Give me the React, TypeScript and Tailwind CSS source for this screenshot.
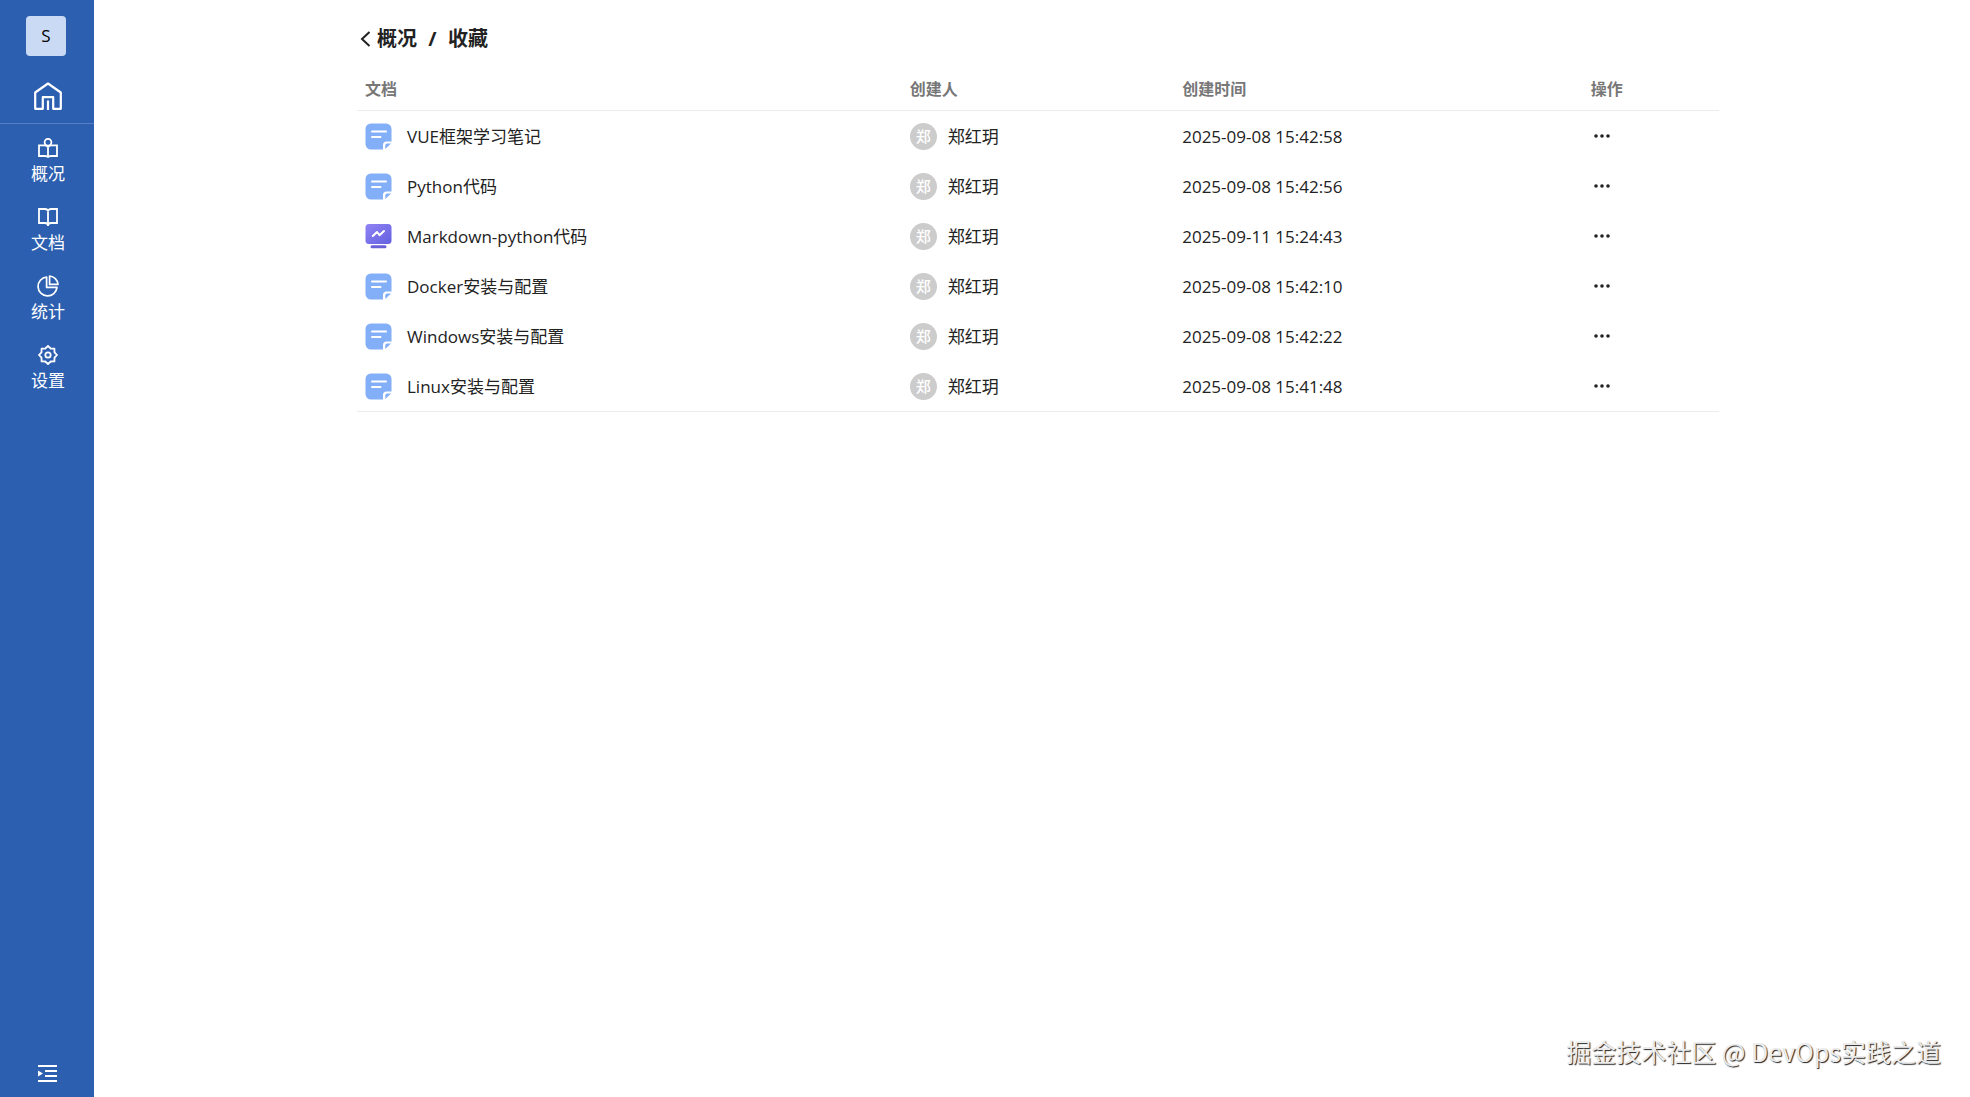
import type { ReactNode } from "react";

type Doc = { title: string; kind: "note" | "markdown"; time: string };

const author = "郑红玥";

const docs: Doc[] = [
  { title: "VUE框架学习笔记", kind: "note", time: "2025-09-08 15:42:58" },
  { title: "Python代码", kind: "note", time: "2025-09-08 15:42:56" },
  { title: "Markdown-python代码", kind: "markdown", time: "2025-09-11 15:24:43" },
  { title: "Docker安装与配置", kind: "note", time: "2025-09-08 15:42:10" },
  { title: "Windows安装与配置", kind: "note", time: "2025-09-08 15:42:22" },
  { title: "Linux安装与配置", kind: "note", time: "2025-09-08 15:41:48" },
];

function HomeIcon() {
  return (
    <svg className="size-7" viewBox="0 0 28 28" fill="none" stroke="currentColor" strokeWidth="2.2" aria-hidden="true">
      <path d="M1.200 26.800V10.500L14 1.500 26.800 10.500V26.800H19.200V15.200H8.800V26.800H1.200Z" strokeLinejoin="round" />
      <path d="M14 18.500V28" />
    </svg>
  );
}

function ReaderIcon() {
  return (
    <svg className="size-5" viewBox="0 0 20 20" fill="none" stroke="currentColor" strokeWidth="1.8" aria-hidden="true">
      <circle cx="10" cy="4.200" r="3.400" />
      <path d="M1 7.400H6.600C8.600 7.400 10 8.400 10 9.800 10 8.400 11.400 7.400 13.400 7.400H19V18H13.200C11.400 18 10 18.600 10 19.400 10 18.600 8.600 18 6.800 18H1Z" />
      <path d="M10 9.500V19.400" />
    </svg>
  );
}

function BookIcon() {
  return (
    <svg className="size-5" viewBox="0 0 20 20" fill="none" stroke="currentColor" strokeWidth="1.8" aria-hidden="true">
      <path d="M1 2H7C8.700 2 10 3.200 10 4.600 10 3.200 11.300 2 13 2H19V16H13C11.500 16 10 17 10 18.600 10 17 8.500 16 7 16H1Z" />
      <path d="M10 4.400V19" />
    </svg>
  );
}

function PieIcon() {
  return (
    <svg className="-my-px size-[22px]" viewBox="0 0 22 22" fill="none" stroke="currentColor" strokeWidth="1.7" strokeLinejoin="round" aria-hidden="true">
      <path d="M9.600 2A9.500 9.500 0 1 0 20 12.400H9.600Z" />
      <path d="M12.600 1A9.300 9.300 0 0 1 21 9.400H12.600Z" />
    </svg>
  );
}

function GearIcon() {
  return (
    <svg className="size-5" viewBox="0 0 20 20" fill="none" stroke="currentColor" strokeWidth="1.8" strokeLinejoin="round" aria-hidden="true">
      <path d="M10 1 12.700 3.500 16.400 3.600 16.500 7.300 19 10 16.500 12.700 16.400 16.400 12.700 16.500 10 19 7.300 16.500 3.600 16.400 3.500 12.700 1 10 3.500 7.300 3.600 3.600 7.300 3.500Z" />
      <circle cx="10" cy="10" r="2.700" />
    </svg>
  );
}

function ExpandIcon() {
  return (
    <svg className="h-[17px] w-[19px]" viewBox="0 0 19 17" fill="currentColor" aria-hidden="true">
      <path d="M0 0H19V2H0ZM7 5H19V7H7ZM7 10H19V12H7ZM0 15H19V17H0ZM0 5.600 5 8.500 0 11.400Z" />
    </svg>
  );
}

function NoteIcon() {
  return (
    <svg className="size-[27px] shrink-0" viewBox="0 0 27 27" aria-hidden="true">
      <path d="M6 .5H21A5.500 5.500 0 0 1 26.500 6V18.500H21.500A3.500 3.500 0 0 0 18 22V26.500H6A5.500 5.500 0 0 1 .5 21V6A5.500 5.500 0 0 1 6 .5Z" fill="#82aff7" />
      <path d="M26 20.500 20.300 26V22.500A2 2 0 0 1 22.300 20.500Z" fill="#82aff7" />
      <path d="M7 8.500H21M7 14H15.500" stroke="#fff" strokeWidth="2" strokeLinecap="round" />
    </svg>
  );
}

function MarkdownIcon() {
  return (
    <svg className="size-[27px] shrink-0" viewBox="0 0 27 27" aria-hidden="true">
      <defs>
        <linearGradient id="screen" x1="0" y1="0" x2="1" y2="1">
          <stop offset="0" stopColor="#9184f5" />
          <stop offset="1" stopColor="#6360df" />
        </linearGradient>
      </defs>
      <rect x=".5" y="1" width="26" height="20" rx="3.500" fill="url(#screen)" />
      <rect x="5.500" y="22.200" width="16" height="3" rx="1.500" fill="#6a60d8" />
      <path d="M7.800 13 12 9 14.500 12.200 19 8" fill="none" stroke="#fff" strokeWidth="2" strokeLinecap="round" strokeLinejoin="round" />
    </svg>
  );
}

function NavItem({ icon, label }: { icon: ReactNode; label: string }) {
  return (
    <a href="#" className="flex h-[69px] flex-col items-center justify-center gap-1 pl-0.5 text-[17px] leading-6">
      {icon}
      <span>{label}</span>
    </a>
  );
}

function Sidebar() {
  return (
    <aside className="flex w-[94px] shrink-0 flex-col bg-[#2d5fb0] text-white">
      <button aria-label="空间 S" className="mt-4 ml-[26px] size-10 rounded bg-[#cbdaf4] text-[17px] text-black">
        S
      </button>
      <a href="#" aria-label="首页" className="flex h-[68px] items-center justify-center border-b border-[#5580c8] pt-3 pl-0.5">
        <HomeIcon />
      </a>
      <nav className="mt-[3px] flex flex-col">
        <NavItem icon={<ReaderIcon />} label="概况" />
        <NavItem icon={<BookIcon />} label="文档" />
        <NavItem icon={<PieIcon />} label="统计" />
        <NavItem icon={<GearIcon />} label="设置" />
      </nav>
      <button aria-label="展开菜单" className="mt-auto mb-[15px] flex justify-center">
        <ExpandIcon />
      </button>
    </aside>
  );
}

function DocTable() {
  return (
    <table className="mt-3 w-full table-fixed border-collapse text-left">
      <colgroup>
        <col className="w-[40%]" />
        <col className="w-[20%]" />
        <col className="w-[30%]" />
        <col className="w-[10%]" />
      </colgroup>
      <thead>
        <tr className="h-11 border-b border-[#ececec] text-base text-[#777]">
          <th scope="col" className="px-2 pt-0.5 font-bold">文档</th>
          <th scope="col" className="px-2 pt-0.5 font-bold">创建人</th>
          <th scope="col" className="px-2 pt-0.5 font-bold">创建时间</th>
          <th scope="col" className="px-2 pt-0.5 font-bold">操作</th>
        </tr>
      </thead>
      <tbody className="border-b border-[#ececec]">
        {docs.map((doc) => (
          <tr key={doc.title} className="h-[50px] last:h-[51px]">
            <td className="px-2 pt-0.5">
              <a href="#" className="flex items-center gap-[15px]">
                {doc.kind === "note" ? <NoteIcon /> : <MarkdownIcon />}
                <span className="pt-0.5">{doc.title}</span>
              </a>
            </td>
            <td className="px-2 pt-0.5">
              <div className="flex items-center gap-[11px]">
                <span className="flex size-[27px] items-center justify-center rounded-full bg-[#ccc] text-[15px] leading-5 font-medium text-white">
                  {author[0]}
                </span>
                <span className="pt-0.5">{author}</span>
              </div>
            </td>
            <td className="px-2 pt-1">{doc.time}</td>
            <td className="px-2 pt-0.5">
              <button aria-label="更多操作" className="flex px-0.5">
                <svg className="h-4 w-[18px]" viewBox="0 0 18 16" fill="currentColor" aria-hidden="true">
                  <circle cx="3" cy="8" r="1.800" />
                  <circle cx="9" cy="8" r="1.800" />
                  <circle cx="15" cy="8" r="1.800" />
                </svg>
              </button>
            </td>
          </tr>
        ))}
      </tbody>
    </table>
  );
}

export default function App() {
  return (
    <div className="relative flex min-h-screen bg-white font-['Open_Sans','Noto_Sans_CJK_SC',sans-serif] text-[17px] leading-6 text-[#222]">
      <Sidebar />
      <main className="min-w-0 flex-1 pt-6 pl-3">
        <div className="mx-auto w-full max-w-[1362px]">
          <nav aria-label="面包屑" className="flex h-[30px] items-center pl-[3px] text-xl font-bold">
            <a href="#" className="flex items-center gap-1.5">
              <svg className="h-4 w-[11px]" viewBox="0 0 11 16" fill="none" stroke="currentColor" strokeWidth="2" aria-hidden="true">
                <path d="M9.500 1 2 8l7.500 7" />
              </svg>
              概况
            </a>
            <span className="w-[31px] text-center">/</span>
            <span>收藏</span>
          </nav>
          <DocTable />
        </div>
      </main>
      <p className="absolute right-[29px] bottom-7 font-['Noto_Sans_CJK_SC',sans-serif] text-[25px] leading-9 text-[#ececec] [text-shadow:1px_1px_1px_#222]">
        掘金技术社区 @ DevOps实践之道
      </p>
    </div>
  );
}
